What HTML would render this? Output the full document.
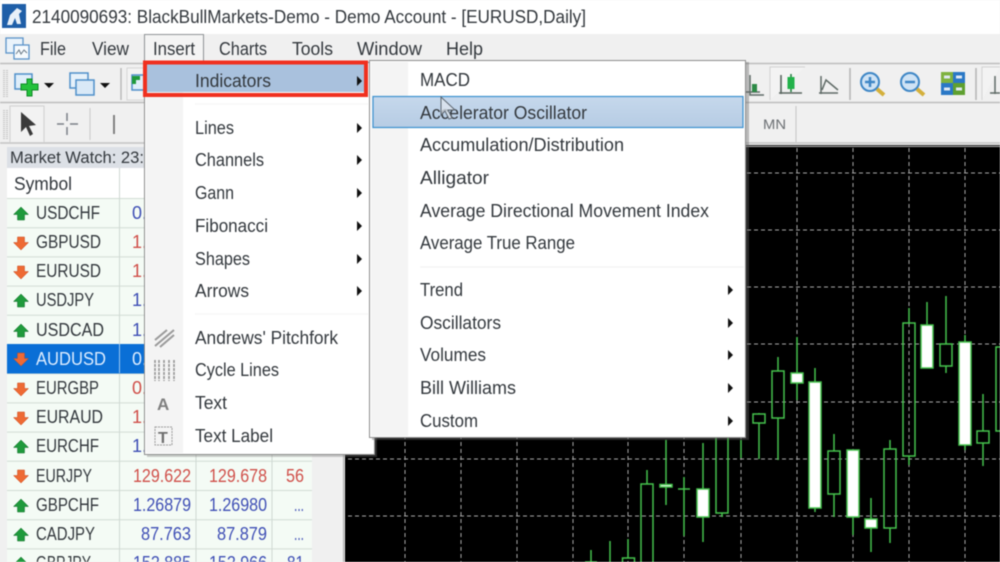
<!DOCTYPE html>
<html><head><meta charset="utf-8"><style>
html,body{margin:0;padding:0;width:1000px;height:562px;overflow:hidden;background:#f0f0f0}
svg{display:block;filter:blur(.5px)}
text{font-family:"Liberation Sans",sans-serif;font-size:18px;fill:#33383d}
.n{fill:#3f4fb5}.r{fill:#d0504a}
</style></head><body>
<svg width="1000" height="562" viewBox="0 0 1000 562" xmlns="http://www.w3.org/2000/svg">
<defs>
<linearGradient id="h" x1="0" y1="0" x2="0" y2="1"><stop offset="0" stop-color="#c6d8ec"/><stop offset="1" stop-color="#b6cce4"/></linearGradient>
<path id="u" d="M0-7 7.500 0.500H3.500V6H-3.500V0.500H-7.500Z" fill="#1f9a3c" stroke="#0f6d28" stroke-width=".5"/>
<path id="d" d="M0 7 7.500-0.500H3.500V-6H-3.500V-0.500H-7.500Z" fill="#ee6a34" stroke="#c9481c" stroke-width=".5"/>
<path id="t" d="M-1-5 4 0-1 5Z" fill="#111"/>
</defs>
<rect width="1000" height="562" fill="#f0f0f0"/>
<!-- title bar -->
<rect width="1000" height="34" fill="#fff"/>
<rect x="2" y="4" width="24" height="24" fill="#1f5fa8"/>
<path d="M7 25 10 15 17 8 22 11 19 14 21 24H17L15 18 12 25Z" fill="#e8f0f8"/>
<text x="32" y="23" textLength="554" lengthAdjust="spacingAndGlyphs">2140090693: BlackBullMarkets-Demo - Demo Account - [EURUSD,Daily]</text>
<!-- menu bar -->
<rect x="6" y="38" width="17" height="15" fill="#eaf3fb" stroke="#5b93c9" stroke-width="1.3"/>
<rect x="14" y="45" width="15" height="14" fill="#f6fafd" stroke="#5b93c9" stroke-width="1.3"/>
<path d="M16 54 19 50 21 54 24 50 27 53" fill="none" stroke="#6b7a88"/>
<text x="40" y="55" textLength="26" lengthAdjust="spacingAndGlyphs">File</text>
<text x="92" y="55" textLength="37" lengthAdjust="spacingAndGlyphs">View</text>
<rect x="144.500" y="34.500" width="59" height="28" fill="#f4f4f4" stroke="#8f9396"/>
<text x="153" y="55" textLength="42" lengthAdjust="spacingAndGlyphs">Insert</text>
<text x="219" y="55" textLength="48" lengthAdjust="spacingAndGlyphs">Charts</text>
<text x="292" y="55" textLength="41" lengthAdjust="spacingAndGlyphs">Tools</text>
<text x="357" y="55" textLength="65" lengthAdjust="spacingAndGlyphs">Window</text>
<text x="446" y="55" textLength="37" lengthAdjust="spacingAndGlyphs">Help</text>
<!-- toolbars -->
<path d="M0 63.500H1000M0 102.500H1000" stroke="#bdbdbd" stroke-width="1.500"/>
<path d="M0 143H1000" stroke="#c4c4c4" stroke-width="1.500"/>
<path d="M4 70V98M7 70V98M4 110V140M7 110V140" stroke="#c6c6c6" stroke-dasharray="1 1" stroke-width="2"/>
<rect x="15" y="74" width="17" height="15" fill="#dfeefa" stroke="#4f8fca" stroke-width="1.500"/>
<path d="M27 79H32V84H38V90H32V96H27V90H21V84H27Z" fill="#24c23c" stroke="#0f8a26"/>
<path d="M44 83H54L49 88Z" fill="#111"/>
<rect x="70" y="73" width="18" height="15" fill="#e6f1fa" stroke="#4f8fca" stroke-width="1.500"/>
<rect x="76" y="80" width="18" height="15" fill="#d9e9f7" stroke="#4f8fca" stroke-width="1.500"/>
<path d="M100 83H110L105 88Z" fill="#111"/>
<path d="M121 68V100" stroke="#bbb" stroke-width="1.500"/>
<rect x="127" y="68" width="20" height="32" fill="#f3f3f3" stroke="#d6d6d6"/>
<rect x="132" y="75" width="14" height="15" fill="#dfeefa" stroke="#4f8fca" stroke-width="1.500"/>
<path d="M140 78H134V84" stroke="#1f9a3c" stroke-width="4" fill="none"/>
<path d="M10 142V106H44V142" fill="#f2f2f2" stroke="#d0d0d0"/>
<path d="M21 112V132L26 127 30 136 33 134 29 126 36 125Z" fill="#3a3a3a"/>
<path d="M57 124H64M70 124H78M67 113V121M67 127V135" stroke="#7a7f85" stroke-width="1.500"/>
<path d="M90 108V140" stroke="#c8c8c8"/>
<path d="M114 115V134" stroke="#777" stroke-width="1.800"/>
<!-- right toolbar -->
<path d="M750 75V95H764M744 92H760" stroke="#5e6a66" stroke-width="1.500" fill="none"/>
<path d="M752 84H757V92H752Z" fill="#2d8a46"/>
<path d="M770 100V67H805" fill="#f3f3f3" stroke="#d2d2d2"/>
<path d="M781 75V94M779 93H802" stroke="#5a6660" stroke-width="1.600" fill="none"/>
<path d="M791 74V92" stroke="#1d7c3a" stroke-width="1.500"/>
<rect x="787.500" y="77" width="7" height="12" fill="#22b24a"/>
<path d="M821 76V94M819 93H838M822 90 826 80 832 85 838 90" stroke="#5f6a66" stroke-width="1.500" fill="none"/>
<path d="M850 68V100" stroke="#b4b4b4" stroke-width="1.500"/>
<circle cx="870" cy="82" r="9" fill="#cfe3f5" stroke="#3f87c6" stroke-width="2"/>
<path d="M865 82H875M870 77V87" stroke="#3f87c6" stroke-width="2.500"/>
<path d="M877 89 884 95" stroke="#d4b03c" stroke-width="4"/>
<circle cx="910" cy="82" r="9" fill="#cfe3f5" stroke="#3f87c6" stroke-width="2"/>
<path d="M905 82H915" stroke="#3f87c6" stroke-width="2.500"/>
<path d="M917 89 924 95" stroke="#d4b03c" stroke-width="4"/>
<rect x="941" y="72" width="12" height="11" fill="#7fb23f"/><rect x="953" y="72" width="12" height="11" fill="#2a78c6"/>
<rect x="941" y="83" width="12" height="12" fill="#2a78c6"/><rect x="953" y="83" width="12" height="12" fill="#5fa030"/>
<path d="M944 77H950M956 77H962M944 89H950M956 89H962" stroke="#dfe9f2" stroke-width="3"/>
<path d="M976 68V100" stroke="#b4b4b4" stroke-width="1.500"/>
<path d="M982 100V67H1000" fill="#f3f3f3" stroke="#d2d2d2"/>
<path d="M995 76V94M990 93H1000" stroke="#5f6a66" stroke-width="1.500" fill="none"/>
<text x="763" y="129" textLength="23" lengthAdjust="spacingAndGlyphs" style="font-size:14px;fill:#6b6f73">MN</text>
<path d="M796 106V142" stroke="#c4c4c4"/>
<!-- market watch -->
<rect x="7" y="147" width="137" height="21" fill="#dce0e6"/>
<text x="10" y="163" textLength="134" lengthAdjust="spacingAndGlyphs" style="font-size:17px">Market Watch: 23:</text>
<rect x="7" y="168" width="305" height="394" fill="#f4fbf5"/>
<rect x="7" y="168" width="305" height="30" fill="#fff"/>
<text x="14" y="190" textLength="58" lengthAdjust="spacingAndGlyphs">Symbol</text>
<path d="M7 198.500H312M7 227.700H312M7 256.900H312M7 286.100H312M7 315.300H312M7 344.500H312M7 373.700H312M7 402.900H312M7 432.100H312M7 461.300H312M7 490.500H312M7 519.700H312M7 548.900H312" stroke="#d2dcd5"/>
<path d="M119.500 168V562M196 198V562M272 198V562" stroke="#cfd8d2"/>
<rect x="7" y="344" width="137" height="29.500" fill="#0a6fd6"/>
<path d="M119.500 344V373" stroke="#9cc6ee"/>
<use href="#u" x="21" y="214"/><text x="36" y="219" textLength="64" lengthAdjust="spacingAndGlyphs">USDCHF</text><text x="132" y="219" class="n">0.9</text>
<use href="#d" x="21" y="243"/><text x="36" y="248" textLength="65" lengthAdjust="spacingAndGlyphs">GBPUSD</text><text x="132" y="248" class="r">1.3</text>
<use href="#d" x="21" y="272"/><text x="36" y="277" textLength="65" lengthAdjust="spacingAndGlyphs">EURUSD</text><text x="132" y="277" class="r">1.1</text>
<use href="#u" x="21" y="301"/><text x="36" y="306" textLength="58" lengthAdjust="spacingAndGlyphs">USDJPY</text><text x="132" y="306" class="n">1.1</text>
<use href="#u" x="21" y="331"/><text x="36" y="336" textLength="68" lengthAdjust="spacingAndGlyphs">USDCAD</text><text x="132" y="336" class="n">1.3</text>
<use href="#d" x="21" y="359"/><text x="36" y="365" textLength="70" lengthAdjust="spacingAndGlyphs" style="fill:#dcecff">AUDUSD</text><text x="132" y="365" style="fill:#dcecff">0.7</text>
<use href="#d" x="21" y="389"/><text x="36" y="394" textLength="63" lengthAdjust="spacingAndGlyphs">EURGBP</text><text x="132" y="394" class="r">0.8</text>
<use href="#d" x="21" y="418"/><text x="36" y="423" textLength="67" lengthAdjust="spacingAndGlyphs">EURAUD</text><text x="132" y="423" class="r">1.6</text>
<use href="#u" x="21" y="447"/><text x="36" y="452" textLength="63" lengthAdjust="spacingAndGlyphs">EURCHF</text><text x="132" y="452" class="n">1.0</text>
<use href="#d" x="21" y="476"/><text x="36" y="482" textLength="56" lengthAdjust="spacingAndGlyphs">EURJPY</text>
<text x="133" y="482" textLength="58" lengthAdjust="spacingAndGlyphs" class="r">129.622</text><text x="209" y="482" textLength="58" lengthAdjust="spacingAndGlyphs" class="r">129.678</text><text x="286" y="482" textLength="18" lengthAdjust="spacingAndGlyphs" class="r">56</text>
<use href="#u" x="21" y="506"/><text x="36" y="511" textLength="63" lengthAdjust="spacingAndGlyphs">GBPCHF</text>
<text x="133" y="511" textLength="58" lengthAdjust="spacingAndGlyphs" class="n">1.26879</text><text x="209" y="511" textLength="58" lengthAdjust="spacingAndGlyphs" class="n">1.26980</text><text x="294" y="511" textLength="10" lengthAdjust="spacingAndGlyphs" class="n">...</text>
<use href="#u" x="21" y="535"/><text x="36" y="540" textLength="59" lengthAdjust="spacingAndGlyphs">CADJPY</text>
<text x="141" y="540" textLength="50" lengthAdjust="spacingAndGlyphs" class="n">87.763</text><text x="217" y="540" textLength="50" lengthAdjust="spacingAndGlyphs" class="n">87.879</text><text x="294" y="540" textLength="10" lengthAdjust="spacingAndGlyphs" class="n">...</text>
<use href="#u" x="21" y="564"/><text x="36" y="569" textLength="55" lengthAdjust="spacingAndGlyphs">GBPJPY</text>
<text x="133" y="569" textLength="58" lengthAdjust="spacingAndGlyphs" class="n">152.885</text><text x="209" y="569" textLength="58" lengthAdjust="spacingAndGlyphs" class="n">152.966</text><text x="287" y="569" textLength="17" lengthAdjust="spacingAndGlyphs" class="n">81</text>
<path d="M343.500 147V562" stroke="#a8a8a8"/>
<!-- chart -->
<rect x="345" y="146" width="655" height="416" fill="#000"/>
<path d="M345 145.500H1000" stroke="#222" stroke-width="1"/>
<path d="M347 146.500H1000" stroke="#eee" stroke-width=".8"/>
<path d="M348 173H1000M348 230H1000M348 287H1000M348 344H1000M348 402H1000M348 459H1000M348 516H1000" stroke="#a8a8a8" stroke-dasharray="4 3"/>
<path d="M405 148V562M461 148V562M517 148V562M573 148V562M628 148V562M684 148V562M741 148V562M797 148V562M853 148V562M909 148V562M965 148V562" stroke="#a8a8a8" stroke-dasharray="4 3"/>
<g stroke="#45c24c" stroke-width="1.500" fill="none">
<path d="M591 550V562M585 562H597M610 541V562M628 539V558M647 470V484M666 440V505M684 477V536M678 489H690M703 443V489M703 517V542M722 513V517M741 440V458M759 413V414M759 423V459M778 357V371M778 418V460M797 337V373M797 383V400M815 368V382M815 508V512M834 434V451M834 494V517M853 517V535M871 498V519M871 528V552M890 440V449M890 528V543M909 308V323M909 456V465M927 302V325M946 296V344M946 366V373M965 335V342M965 445V450M983 394V431M983 443V466"/>
<rect x="622.500" y="558" width="12" height="8"/>
<rect x="641" y="484" width="12" height="84"/>
<rect x="716" y="430" width="12" height="83"/>
<rect x="753" y="414" width="12" height="9"/>
<rect x="772" y="371" width="12" height="47"/>
<rect x="828" y="451" width="12" height="43"/>
<rect x="884" y="449" width="12" height="79"/>
<rect x="903" y="323" width="12" height="133"/>
<rect x="940" y="344" width="12" height="22"/>
<rect x="977" y="431" width="12" height="12"/>
<rect x="996" y="347" width="12" height="84"/>
<g fill="#fff">
<rect x="660" y="484.500" width="12" height="2.500"/>
<rect x="697" y="489" width="12" height="28"/>
<rect x="791" y="373" width="12" height="10"/>
<rect x="809" y="382" width="12" height="126"/>
<rect x="847" y="450" width="12" height="67"/>
<rect x="865" y="519" width="12" height="9"/>
<rect x="921" y="325" width="12" height="43"/>
<rect x="959" y="342" width="12" height="103"/>
</g></g>
<!-- main menu -->
<rect x="147" y="62" width="230" height="395" fill="#777" opacity=".35"/>
<rect x="144.500" y="62.500" width="230" height="392" fill="#fff" stroke="#8c8c8c"/>
<rect x="146" y="64" width="37" height="389" fill="#f4f4f4"/>
<rect x="147" y="64" width="219" height="28" fill="#a9c1dd"/>
<rect x="145" y="62.500" width="221" height="32.500" fill="none" stroke="#f0301f" stroke-width="4"/>
<path d="M195 104H368M195 314H368" stroke="#f3f3f3"/>
<text x="195" y="87" textLength="76" lengthAdjust="spacingAndGlyphs">Indicators</text><use href="#t" x="358" y="81"/>
<text x="195" y="134" textLength="39" lengthAdjust="spacingAndGlyphs">Lines</text><use href="#t" x="358" y="128"/>
<text x="195" y="166" textLength="69" lengthAdjust="spacingAndGlyphs">Channels</text><use href="#t" x="358" y="160"/>
<text x="195" y="199" textLength="39" lengthAdjust="spacingAndGlyphs">Gann</text><use href="#t" x="358" y="193"/>
<text x="195" y="232" textLength="73" lengthAdjust="spacingAndGlyphs">Fibonacci</text><use href="#t" x="358" y="226"/>
<text x="195" y="265" textLength="55" lengthAdjust="spacingAndGlyphs">Shapes</text><use href="#t" x="358" y="259"/>
<text x="195" y="297" textLength="54" lengthAdjust="spacingAndGlyphs">Arrows</text><use href="#t" x="358" y="291"/>
<text x="195" y="344" textLength="143" lengthAdjust="spacingAndGlyphs">Andrews' Pitchfork</text>
<text x="195" y="376" textLength="84" lengthAdjust="spacingAndGlyphs">Cycle Lines</text>
<text x="195" y="409" textLength="32" lengthAdjust="spacingAndGlyphs">Text</text>
<text x="195" y="442" textLength="78" lengthAdjust="spacingAndGlyphs">Text Label</text>
<path d="M155 340 167 330M155 346 174 330M160 347 174 335" stroke="#9a9a9a" stroke-width="2"/>
<path d="M155 360V381M159 360V381M164 360V381M169 360V381M174 360V381" stroke="#8f8f8f" stroke-width="1.500" stroke-dasharray="3 1"/>
<text x="157" y="410" style="font-size:17px;font-weight:bold;fill:#7f7f7f">A</text>
<rect x="155" y="427" width="17" height="18" fill="none" stroke="#999" stroke-dasharray="2 1"/>
<text x="158" y="443" style="font-size:16px;font-weight:bold;fill:#6f6f6f">T</text>
<!-- sub menu -->
<rect x="372" y="62" width="377" height="378" fill="#666" opacity=".4"/>
<rect x="369.500" y="60.500" width="376" height="377" fill="#fff" stroke="#8c8c8c"/>
<rect x="371" y="62" width="37" height="374" fill="#f4f4f4"/>
<rect x="373" y="96.500" width="370" height="31" fill="url(#h)" stroke="#3a90cf" stroke-width="1.200"/>
<path d="M420 267H744" stroke="#f1f1f1"/>
<text x="420" y="86" textLength="50" lengthAdjust="spacingAndGlyphs">MACD</text>
<text x="420" y="119" textLength="167" lengthAdjust="spacingAndGlyphs">Accelerator Oscillator</text>
<text x="420" y="151" textLength="204" lengthAdjust="spacingAndGlyphs">Accumulation/Distribution</text>
<text x="420" y="184" textLength="69" lengthAdjust="spacingAndGlyphs">Alligator</text>
<text x="420" y="217" textLength="289" lengthAdjust="spacingAndGlyphs">Average Directional Movement Index</text>
<text x="420" y="249" textLength="155" lengthAdjust="spacingAndGlyphs">Average True Range</text>
<text x="420" y="296" textLength="43" lengthAdjust="spacingAndGlyphs">Trend</text><use href="#t" x="729" y="290"/>
<text x="420" y="329" textLength="81" lengthAdjust="spacingAndGlyphs">Oscillators</text><use href="#t" x="729" y="323"/>
<text x="420" y="361" textLength="66" lengthAdjust="spacingAndGlyphs">Volumes</text><use href="#t" x="729" y="355"/>
<text x="420" y="394" textLength="96" lengthAdjust="spacingAndGlyphs">Bill Williams</text><use href="#t" x="729" y="388"/>
<text x="420" y="427" textLength="58" lengthAdjust="spacingAndGlyphs">Custom</text><use href="#t" x="729" y="421"/>
<!-- cursor -->
<path d="M441 97V115L445 111 449 119 452 118 448 110 455 110Z" fill="#dfe6ee" fill-opacity=".75" stroke="#5d6670"/>
</svg>
</body></html>
